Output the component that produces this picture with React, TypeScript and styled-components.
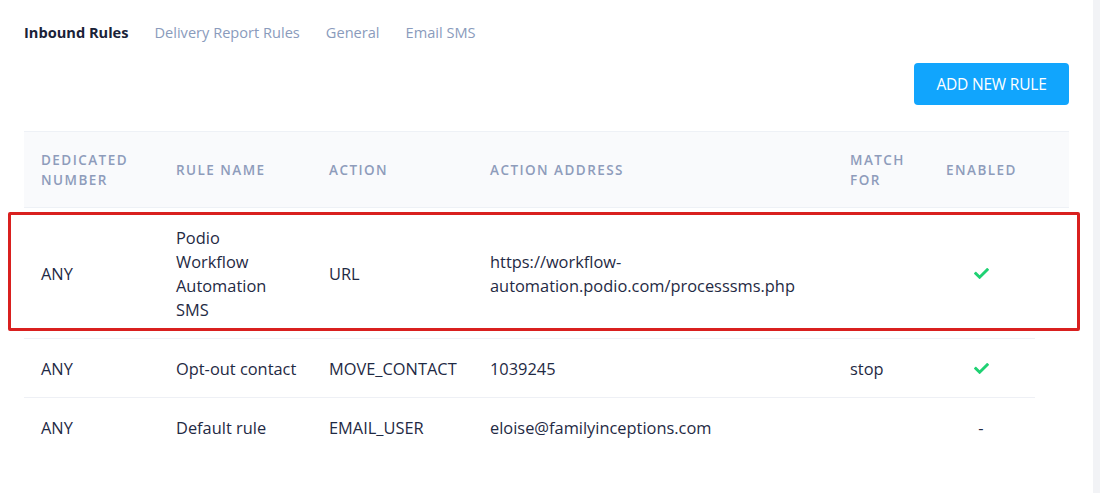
import React from "react";
import styled, { createGlobalStyle } from "styled-components";
import { FaCheck } from "react-icons/fa";

const Global = createGlobalStyle`
  html, body { margin: 0; padding: 0; background: #ffffff; }
  body { font-family: "Open Sans", "Noto Sans", sans-serif; color: #1f2a44; }
`;

const Shell = styled.div`
  display: flex;
  width: 1100px;
  height: 493px;
  overflow: hidden;
`;

const Main = styled.main`
  flex: 1;
  padding: 22px 24px 0 24px;
`;

const Scrollbar = styled.div`
  width: 7px;
  background: #f2f3f6;
`;

const Tabs = styled.nav`
  display: flex;
  gap: 26px;
`;

const Tab = styled.span<{ $active?: boolean }>`
  font-size: 14.6px;
  line-height: 20px;
  font-weight: ${(p) => (p.$active ? 700 : 400)};
  color: ${(p) => (p.$active ? "#1a2238" : "#8a9bbc")};
`;

const Toolbar = styled.div`
  display: flex;
  justify-content: flex-end;
  margin-top: 21px;
`;

const Button = styled.button`
  height: 42px;
  width: 155px;
  border: none;
  border-radius: 4px;
  background: #11a5fd;
  color: #ffffff;
  font-family: "Open Sans", sans-serif;
  font-size: 15.5px;
  letter-spacing: -0.2px;
  cursor: pointer;
`;

const TableWrap = styled.div`
  position: relative;
  margin-top: 26px;
`;

const cols = "135px 153px 161px 360px 96px 1fr";

const HeadRow = styled.div`
  display: grid;
  grid-template-columns: ${cols};
  align-items: center;
  background: #f9fafc;
  border-top: 1px solid #eef1f6;
  border-bottom: 1px solid #eef1f6;
  min-height: 77px;
  padding-top: 1px;
  box-sizing: border-box;
`;

const HeadCell = styled.div`
  padding: 0 17px;
  font-size: 13.5px;
  line-height: 20px;
  font-weight: 600;
  letter-spacing: 1.45px;
  color: #8e9cbb;
  text-transform: uppercase;
`;

const Row = styled.div<{ $last?: boolean }>`
  display: grid;
  grid-template-columns: ${cols};
  align-items: center;
  padding: 17.5px 0 16.5px;
  border-bottom: 1px solid ${(p) => (p.$last ? "transparent" : "#eef0f5")};
  margin-right: ${(p) => (p.$last ? "0" : "34px")};
`;

const Cell = styled.div`
  padding: 0 17px;
  font-size: 16.4px;
  line-height: 24px;
  color: #1f2a44;
  white-space: nowrap;
`;

const Status = styled.div`
  width: 70px;
  display: flex;
  justify-content: center;
  color: #1fd173;
`;

const Dash = styled.span`
  color: #1f2a44;
`;

const Highlight = styled.div`
  position: absolute;
  left: -16px;
  top: 81px;
  width: 1072px;
  height: 119px;
  box-sizing: border-box;
  border: 3.5px solid #d9201f;
  border-radius: 2px;
  pointer-events: none;
`;

type Rule = {
  number: string;
  name: string[];
  action: string;
  address: string[];
  match: string;
  enabled: boolean;
};

const rules: Rule[] = [
  {
    number: "ANY",
    name: ["Podio", "Workflow", "Automation", "SMS"],
    action: "URL",
    address: ["https://workflow-", "automation.podio.com/processsms.php"],
    match: "",
    enabled: true,
  },
  {
    number: "ANY",
    name: ["Opt-out contact"],
    action: "MOVE_CONTACT",
    address: ["1039245"],
    match: "stop",
    enabled: true,
  },
  {
    number: "ANY",
    name: ["Default rule"],
    action: "EMAIL_USER",
    address: ["eloise@familyinceptions.com"],
    match: "",
    enabled: false,
  },
];

const Lines = ({ lines }: { lines: string[] }) => (
  <>
    {lines.map((l, i) => (
      <React.Fragment key={i}>
        {i > 0 && <br />}
        {l}
      </React.Fragment>
    ))}
  </>
);

export default function App() {
  return (
    <Shell>
      <Global />
      <Main>
        <Tabs>
          <Tab $active>Inbound Rules</Tab>
          <Tab>Delivery Report Rules</Tab>
          <Tab>General</Tab>
          <Tab>Email SMS</Tab>
        </Tabs>
        <Toolbar>
          <Button>ADD NEW RULE</Button>
        </Toolbar>
        <TableWrap>
          <HeadRow>
            <HeadCell>Dedicated Number</HeadCell>
            <HeadCell>Rule Name</HeadCell>
            <HeadCell>Action</HeadCell>
            <HeadCell>Action Address</HeadCell>
            <HeadCell>Match For</HeadCell>
            <HeadCell>Enabled</HeadCell>
          </HeadRow>
          {rules.map((r, i) => (
            <Row key={i} $last={i === rules.length - 1}>
              <Cell>{r.number}</Cell>
              <Cell>
                <Lines lines={r.name} />
              </Cell>
              <Cell>{r.action}</Cell>
              <Cell>
                <Lines lines={r.address} />
              </Cell>
              <Cell>{r.match}</Cell>
              <Cell>
                <Status>{r.enabled ? <FaCheck size={15} /> : <Dash>-</Dash>}</Status>
              </Cell>
            </Row>
          ))}
          <Highlight />
        </TableWrap>
      </Main>
      <Scrollbar />
    </Shell>
  );
}
